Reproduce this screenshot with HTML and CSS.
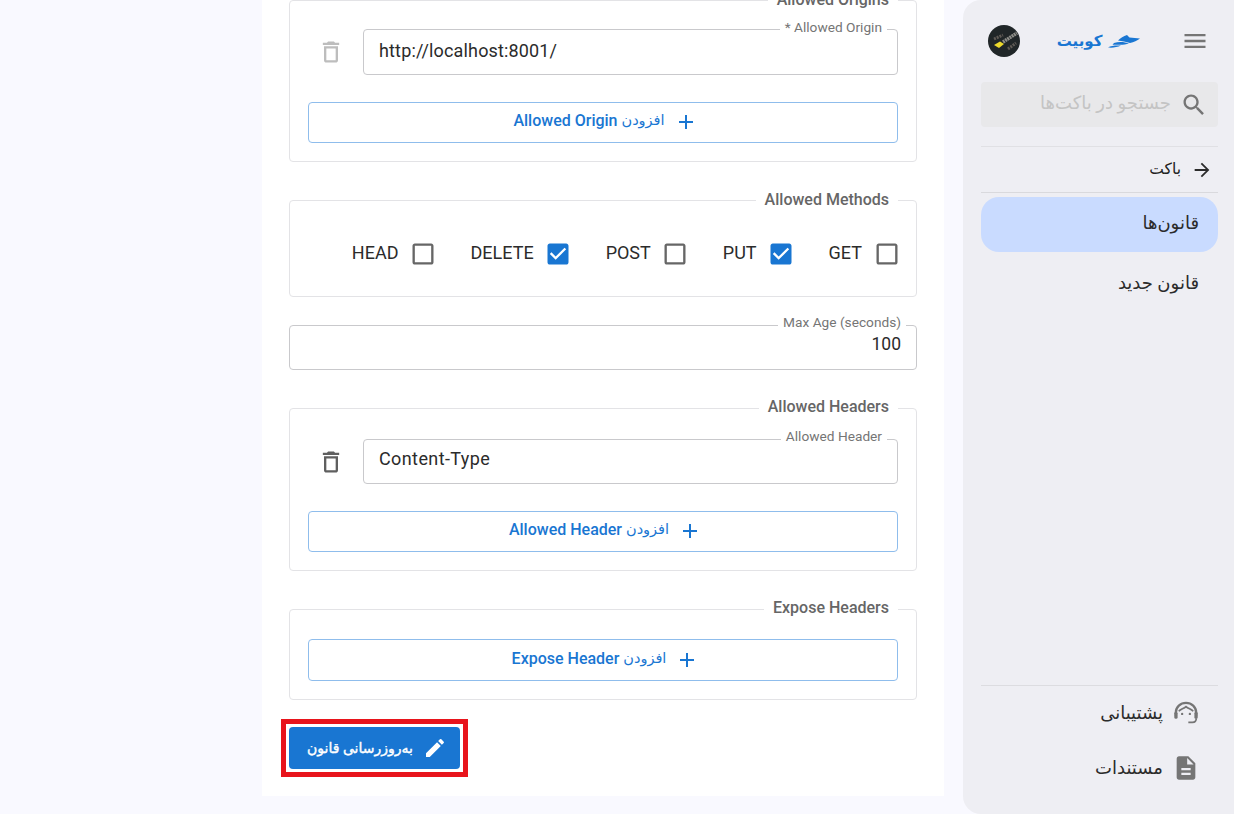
FILE: index.html
```html
<!DOCTYPE html>
<html lang="fa">
<head>
<meta charset="utf-8">
<title>قانون‌ها</title>
<link rel="stylesheet" href="styles.css">
</head>
<body>
<div class="page">
  <main class="panel">
    <div class="form">
      <fieldset class="group group-origins">
        <legend>Allowed Origins</legend>
        <div class="entry entry-origin">
          <div class="field field-entry">
            <span class="float-label">* Allowed Origin</span>
            <span class="value">http://localhost:8001/</span>
          </div>
          <svg class="trash trash-off" viewBox="0 0 24 24"><path d="M6 19c0 1.100.9 2 2 2h8c1.100 0 2-.9 2-2V7H6v12zM8 9h8v10H8V9zm7.500-5l-1-1h-5l-1 1H5v2h14V4z"/></svg>
        </div>
        <button class="add"><svg class="plus" viewBox="0 0 24 24"><path d="M19 13h-6v6h-2v-6H5v-2h6V5h2v6h6v2z"/></svg><span class="fa">افزودن</span><span>Allowed Origin</span></button>
      </fieldset>

      <fieldset class="group group-methods">
        <legend>Allowed Methods</legend>
        <div class="methods">
          <label class="check"><svg viewBox="0 0 24 24"><path d="M19 5v14H5V5h14m0-2H5c-1.100 0-2 .9-2 2v14c0 1.100.9 2 2 2h14c1.100 0 2-.9 2-2V5c0-1.100-.9-2-2-2z"/></svg><span>GET</span></label>
          <label class="check on"><svg viewBox="0 0 24 24"><path d="M19 3H5c-1.110 0-2 .9-2 2v14c0 1.100.89 2 2 2h14c1.110 0 2-.9 2-2V5c0-1.100-.89-2-2-2zm-9 14l-5-5 1.410-1.410L10 14.170l7.590-7.590L19 8l-9 9z"/></svg><span>PUT</span></label>
          <label class="check"><svg viewBox="0 0 24 24"><path d="M19 5v14H5V5h14m0-2H5c-1.100 0-2 .9-2 2v14c0 1.100.9 2 2 2h14c1.100 0 2-.9 2-2V5c0-1.100-.9-2-2-2z"/></svg><span>POST</span></label>
          <label class="check on"><svg viewBox="0 0 24 24"><path d="M19 3H5c-1.110 0-2 .9-2 2v14c0 1.100.89 2 2 2h14c1.110 0 2-.9 2-2V5c0-1.100-.89-2-2-2zm-9 14l-5-5 1.410-1.410L10 14.170l7.590-7.590L19 8l-9 9z"/></svg><span>DELETE</span></label>
          <label class="check"><svg viewBox="0 0 24 24"><path d="M19 5v14H5V5h14m0-2H5c-1.100 0-2 .9-2 2v14c0 1.100.9 2 2 2h14c1.100 0 2-.9 2-2V5c0-1.100-.9-2-2-2z"/></svg><span>HEAD</span></label>
        </div>
      </fieldset>

      <div class="field field-age">
        <span class="float-label label-age">Max Age (seconds)</span>
        <span class="value value-age">100</span>
      </div>

      <fieldset class="group group-headers">
        <legend>Allowed Headers</legend>
        <div class="entry entry-header">
          <div class="field field-entry">
            <span class="float-label">Allowed Header</span>
            <span class="value">Content-Type</span>
          </div>
          <svg class="trash" viewBox="0 0 24 24"><path d="M6 19c0 1.100.9 2 2 2h8c1.100 0 2-.9 2-2V7H6v12zM8 9h8v10H8V9zm7.500-5l-1-1h-5l-1 1H5v2h14V4z"/></svg>
        </div>
        <button class="add"><svg class="plus" viewBox="0 0 24 24"><path d="M19 13h-6v6h-2v-6H5v-2h6V5h2v6h6v2z"/></svg><span class="fa">افزودن</span><span>Allowed Header</span></button>
      </fieldset>

      <fieldset class="group group-expose">
        <legend>Expose Headers</legend>
        <button class="add"><svg class="plus" viewBox="0 0 24 24"><path d="M19 13h-6v6h-2v-6H5v-2h6V5h2v6h6v2z"/></svg><span class="fa">افزودن</span><span>Expose Header</span></button>
      </fieldset>

      <div class="actions">
        <div class="mark">
          <button class="submit"><svg viewBox="0 0 24 24"><path d="M3 17.250V21h3.750L17.810 9.940l-3.750-3.750L3 17.250zM20.710 7.040c.39-.39.39-1.020 0-1.410l-2.340-2.340a.9959.9959 0 0 0-1.410 0l-1.830 1.830 3.750 3.750 1.830-1.830z"/></svg><span>به‌روزرسانی قانون</span></button>
        </div>
      </div>
    </div>
  </main>

  <aside class="side">
    <header class="side-head">
      <svg class="menu" viewBox="0 0 24 24"><path d="M3 18h18v-2H3v2zm0-5h18v-2H3v2zm0-7v2h18V6H3z"/></svg>
      <div class="brand">
        <svg class="boat" viewBox="0 0 32 13"><path d="M10 5.500C12.500 3 15.500 1 19 0L21.500 2.500 32 3.500C29 5.500 26 7 22 8 18 6.800 14 6 10 5.500ZM6 8C11 6.300 17 7 21 8.500 17.500 9.800 13 10 9.500 9.700L4.500 9.800ZM0 12.500C3 10.800 7 10.300 13 10.600 9 12.300 4.500 13 0 12.500Z"/></svg>
        <span>کوبیت</span>
      </div>
      <svg class="avatar" viewBox="0 0 32 32">
        <circle cx="16" cy="16" r="16" fill="#202628"/>
        <path d="M6 14L15 10M20 24L28 18" stroke="#5f5a55" stroke-width="3" stroke-dasharray="2 1"/>
        <path d="M15 17L29 8" stroke="#8d8d88" stroke-width="3.500" stroke-dasharray="2 .6"/>
        <path d="M6 20L12 16.500 16 19 11 23Z" fill="#ecd92c"/>
      </svg>
    </header>
    <div class="search">
      <svg viewBox="0 0 24 24"><path d="M15.500 14h-.79l-.28-.27C15.410 12.590 16 11.110 16 9.500 16 5.910 13.090 3 9.500 3S3 5.910 3 9.500 5.910 16 9.500 16c1.610 0 3.090-.59 4.230-1.570l.27.28v.79l5 4.990L20.490 19l-4.990-5zm-6 0C7.010 14 5 11.990 5 9.500S7.010 5 9.500 5 14 7.010 14 9.500 11.990 14 9.500 14z"/></svg>
      <span>جستجو در باکت‌ها</span>
    </div>
    <div class="back">
      <svg viewBox="0 0 24 24"><path d="M12 4l-1.410 1.410L16.170 11H4v2h12.170l-5.580 5.590L12 20l8-8z"/></svg>
      <span>باکت</span>
    </div>
    <nav class="nav">
      <a class="nav-item active">قانون‌ها</a>
      <a class="nav-item">قانون جدید</a>
    </nav>
    <div class="foot">
      <a class="foot-item">
        <svg viewBox="0 0 24 24"><path d="M3.300 15v-3.500a8.700 8.200 0 0 1 17.400 0V15" class="stroke"/><path d="M5.800 10.500C7.500 8.700 10 8.300 12 6.500c2 1.800 4.500 2.200 6.200 4" class="stroke thin"/><rect x="2" y="11" width="2.800" height="6" rx="1.300"/><rect x="19.200" y="11" width="2.800" height="6" rx="1.300"/><circle cx="8.700" cy="12.800" r="1"/><circle cx="15.300" cy="12.800" r="1"/><path d="M20.800 16.500c0 2.200-1.200 3.500-3.300 3.500h-3.500" class="stroke thin"/></svg>
        <span>پشتیبانی</span>
      </a>
      <a class="foot-item">
        <svg viewBox="0 0 24 24"><path d="M14 2H6c-1.100 0-1.990.9-1.990 2L4 20c0 1.100.89 2 1.990 2H18c1.100 0 2-.9 2-2V8l-6-6zm2 16H8v-2h8v2zm0-4H8v-2h8v2zm-3-5V3.500L18.500 9H13z"/></svg>
        <span>مستندات</span>
      </a>
    </div>
  </aside>
</div>
</body>
</html>
```
FILE: styles.css
```css
* { box-sizing: border-box; }
html, body { margin: 0; height: 100%; }
body {
  background: #f9f9ff;
  font-family: Roboto, "DejaVu Sans", sans-serif;
  color: #222;
  overflow: hidden;
}
.page {
  display: flex;
  height: 814px;
  padding-left: 262px;
  align-items: flex-start;
}
.panel {
  width: 682px;
  height: 796px;
  background: #fff;
  overflow: hidden;
}
.form {
  display: flex;
  flex-direction: column;
  padding: 0 27px;
}
.group {
  margin: 0;
  padding: 0 18px 0;
  border: 1px solid #e3e3e6;
  border-radius: 4px;
  direction: rtl;
  min-width: 0;
}
.group legend {
  padding: 0 9px;
  margin-right: 0;
  font-size: 16px;
  font-weight: 500;
  line-height: 18px;
  color: #666;
}
.group-headers legend,
.group-expose legend { padding-bottom: 2px; }
.group-origins { height: 171px; margin-top: -9px; }
.group-methods { height: 106px; margin-top: 29px; }
.group-headers { height: 173px; margin-top: 28px; }
.group-expose { height: 101px; margin-top: 28px; }
.entry {
  display: flex;
  align-items: center;
  gap: 18px;
  direction: rtl;
  padding-left: 9px;
}
.entry-origin { margin-top: 20px; }
.entry-header { margin-top: 21px; }
.field {
  position: relative;
  display: flex;
  align-items: center;
  border: 1px solid #c9c9cc;
  border-radius: 4px;
  background: #fff;
  direction: ltr;
}
.field-entry { flex: 1; margin-bottom: 27px; }
.entry-origin .field-entry { height: 46px; padding: 0 15px 4px; }
.entry-header .field-entry { height: 45px; padding: 0 15px 7px; }
.float-label {
  position: absolute;
  top: -11px;
  right: 10px;
  padding: 0 5px;
  background: #fff;
  font-size: 13.700px;
  line-height: 17px;
  color: #757575;
}
.label-age { top: -12px; }
.entry-header .float-label { top: -12px; }
.value { font-size: 18px; letter-spacing: .15px; color: #2b2b2b; }
.entry-header .value { letter-spacing: .4px; }
.field-age {
  height: 45px;
  margin-top: 28px;
  padding: 2px 15px 9px;
  justify-content: flex-end;
}
.value-age { font-size: 17.500px; letter-spacing: 0; }
.trash { width: 28px; height: 28px; fill: #5f5f5f; margin-bottom: 27px; flex: none; }
.trash-off { fill: #bdbdbd; }
.add {
  display: flex;
  align-items: center;
  justify-content: center;
  gap: 4px;
  width: 100%;
  height: 41px;
  background: #fff;
  border: 1px solid #8fbdec;
  border-radius: 4px;
  color: #1976d2;
  font: 500 16px Roboto, "DejaVu Sans", sans-serif;
  direction: rtl;
  padding: 0 0 4px 5px;
}
.add .fa { font-size: 14.500px; font-weight: 400; }
.add .plus { margin-top: 3px; }
.group-expose .add { margin-top: 20px; height: 42px; padding-bottom: 3px; }
.plus { width: 24px; height: 24px; fill: #1976d2; margin-left: 5px; }
.methods {
  display: flex;
  gap: 37px;
  margin-top: 30px;
  padding-right: 1px;
  direction: rtl;
}
.check {
  display: flex;
  align-items: center;
  gap: 14px;
  font-size: 18px;
  color: #2b2b2b;
  height: 30px;
}
.check span { margin-bottom: 3px; }
.check svg { width: 28px; height: 28px; fill: #666; margin: 0 -3.500px; flex: none; }
.check.on svg { fill: #1976d2; }
.actions { display: flex; margin-top: 19px; margin-left: -8px; }
.mark {
  display: flex;
  padding: 3px;
  border: 5px solid #e8141c;
}
.submit {
  display: flex;
  align-items: center;
  justify-content: center;
  gap: 10px;
  width: 171px;
  height: 42px;
  direction: rtl;
  background: #1976d2;
  color: #fff;
  border: 0;
  border-radius: 4px;
  font: 400 14px Roboto, "DejaVu Sans", sans-serif;
  -webkit-text-stroke: .4px #fff;
  padding: 0 0 0 5px;
}
.submit svg { width: 24px; height: 24px; fill: #fff; flex: none; }
.side {
  direction: rtl;
  margin-left: 19px;
  width: 271px;
  height: 814px;
  background: #eeeef3;
  border-top-left-radius: 18px;
  border-bottom-left-radius: 18px;
  padding: 0 16px 0 18px;
  display: flex;
  flex-direction: column;
}
.side-head {
  display: flex;
  align-items: center;
  justify-content: space-between;
  height: 32px;
  margin-top: 25px;
  padding: 0 9px 0 7px;
}
.menu { width: 28px; height: 28px; fill: #757575; flex: none; }
.brand {
  display: flex;
  align-items: center;
  gap: 6px;
  color: #1976d2;
  font-size: 15px;
  font-weight: 700;
  margin-right: 4px;
}
.boat { width: 32px; height: 13px; fill: #1976d2; }
.avatar { width: 32px; height: 32px; flex: none; }
.search {
  display: flex;
  align-items: center;
  gap: 9px;
  height: 45px;
  margin-top: 25px;
  padding: 0 10px;
  background: #e8e8ea;
  border-radius: 4px;
  color: #c4c4c4;
  font-size: 18px;
}
.search span { margin-bottom: 5px; }
.search svg { width: 28px; height: 28px; fill: #757575; flex: none; }
.back {
  display: flex;
  align-items: center;
  gap: 10px;
  height: 47px;
  margin-top: 19px;
  padding: 0 5px;
  border-top: 1px solid #e0e0e4;
  border-bottom: 1px solid #d9d9dd;
  font-size: 15.500px;
}
.back span { margin-bottom: 2px; }
.back svg { width: 22px; height: 22px; fill: #2b2b2b; flex: none; }
.nav { display: flex; flex-direction: column; gap: 5px; margin-top: 4px; }
.nav-item {
  display: flex;
  align-items: center;
  height: 55px;
  padding: 0 19px 4px;
  border-radius: 18px;
  font-size: 18px;
  color: #2b2b2b;
}
.active { background: #c9dbff; }
.foot {
  margin-top: auto;
  margin-bottom: 18px;
  border-top: 1px solid #dcdce0;
  display: flex;
  flex-direction: column;
}
.foot-item {
  display: flex;
  align-items: center;
  gap: 9px;
  height: 55px;
  padding: 0 18px 2px;
  font-size: 18px;
  color: #2b2b2b;
}
.foot-item svg { width: 28px; height: 28px; fill: #757575; flex: none; }
.stroke { fill: none; stroke: #757575; stroke-width: 2; }
.thin { stroke-width: 1.500; }
```
